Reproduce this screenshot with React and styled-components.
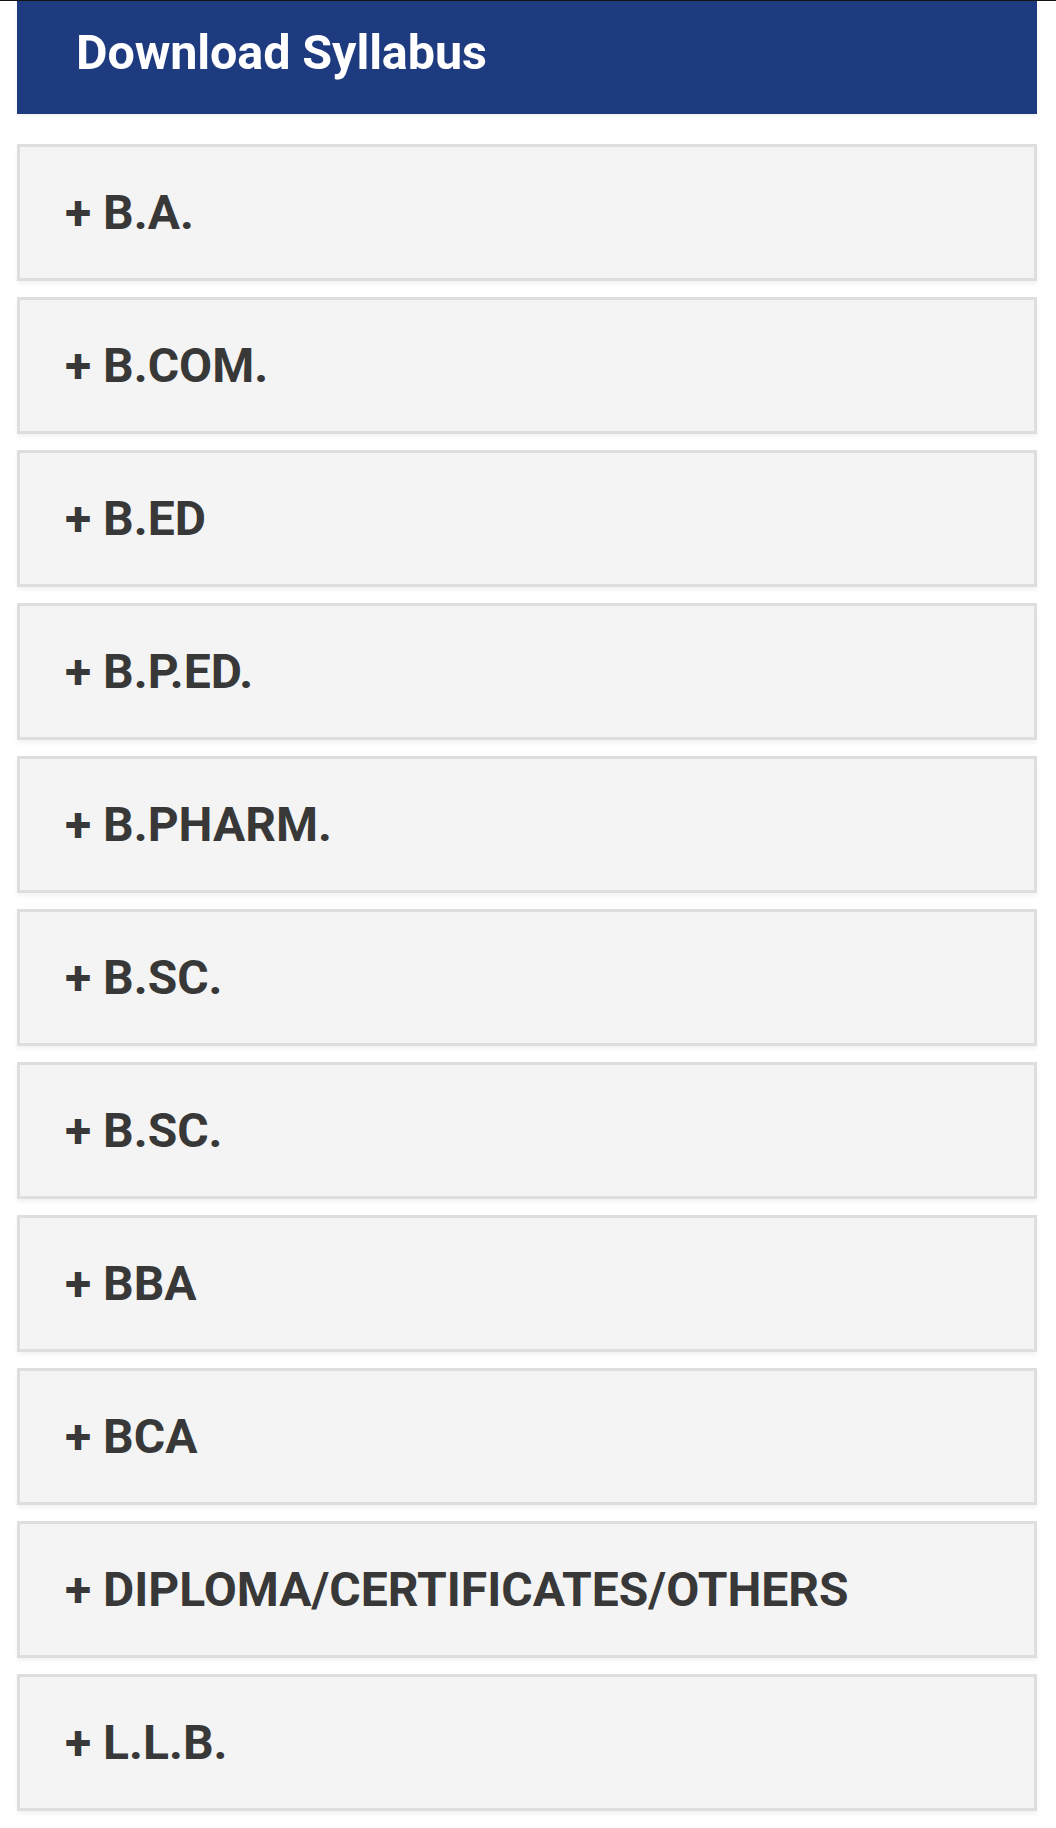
import React from "react";
import styled, { createGlobalStyle } from "styled-components";

const GlobalStyle = createGlobalStyle`
  body {
    margin: 0;
    background: #ffffff;
    font-family: Roboto, "Liberation Sans", Arial, sans-serif;
  }
`;

const Page = styled.div`
  border-top: 1px solid #141414;
  padding: 0 19px 20px 17px;
`;

const Header = styled.div`
  height: 113px;
  box-sizing: border-box;
  background: #1f3b80;
  display: flex;
  align-items: center;
  padding: 0 0 10px 59px;
  box-shadow: 0 2px 4px rgba(0, 0, 0, 0.06);
`;

const Title = styled.h2`
  margin: 0;
  color: #ffffff;
  font-size: 48.5px;
  font-weight: 700;
  letter-spacing: -0.1px;
`;

const List = styled.div`
  display: flex;
  flex-direction: column;
  gap: 16px;
  margin-top: 30px;
`;

const Item = styled.div`
  height: 137px;
  box-sizing: border-box;
  border: 3px solid #dedede;
  background: #f4f4f4;
  box-shadow: 0 3px 4px rgba(0, 0, 0, 0.05);
  display: flex;
  align-items: center;
  padding-left: 45px;
  font-size: 48px;
  font-weight: 700;
  color: #383838;
  cursor: pointer;
`;

const courses = [
  "B.A.",
  "B.COM.",
  "B.ED",
  "B.P.ED.",
  "B.PHARM.",
  "B.SC.",
  "B.SC.",
  "BBA",
  "BCA",
  "DIPLOMA/CERTIFICATES/OTHERS",
  "L.L.B.",
];

export default function App() {
  return (
    <Page>
      <GlobalStyle />
      <Header>
        <Title>Download Syllabus</Title>
      </Header>
      <List>
        {courses.map((c, i) => (
          <Item key={i}>+ {c}</Item>
        ))}
      </List>
    </Page>
  );
}
